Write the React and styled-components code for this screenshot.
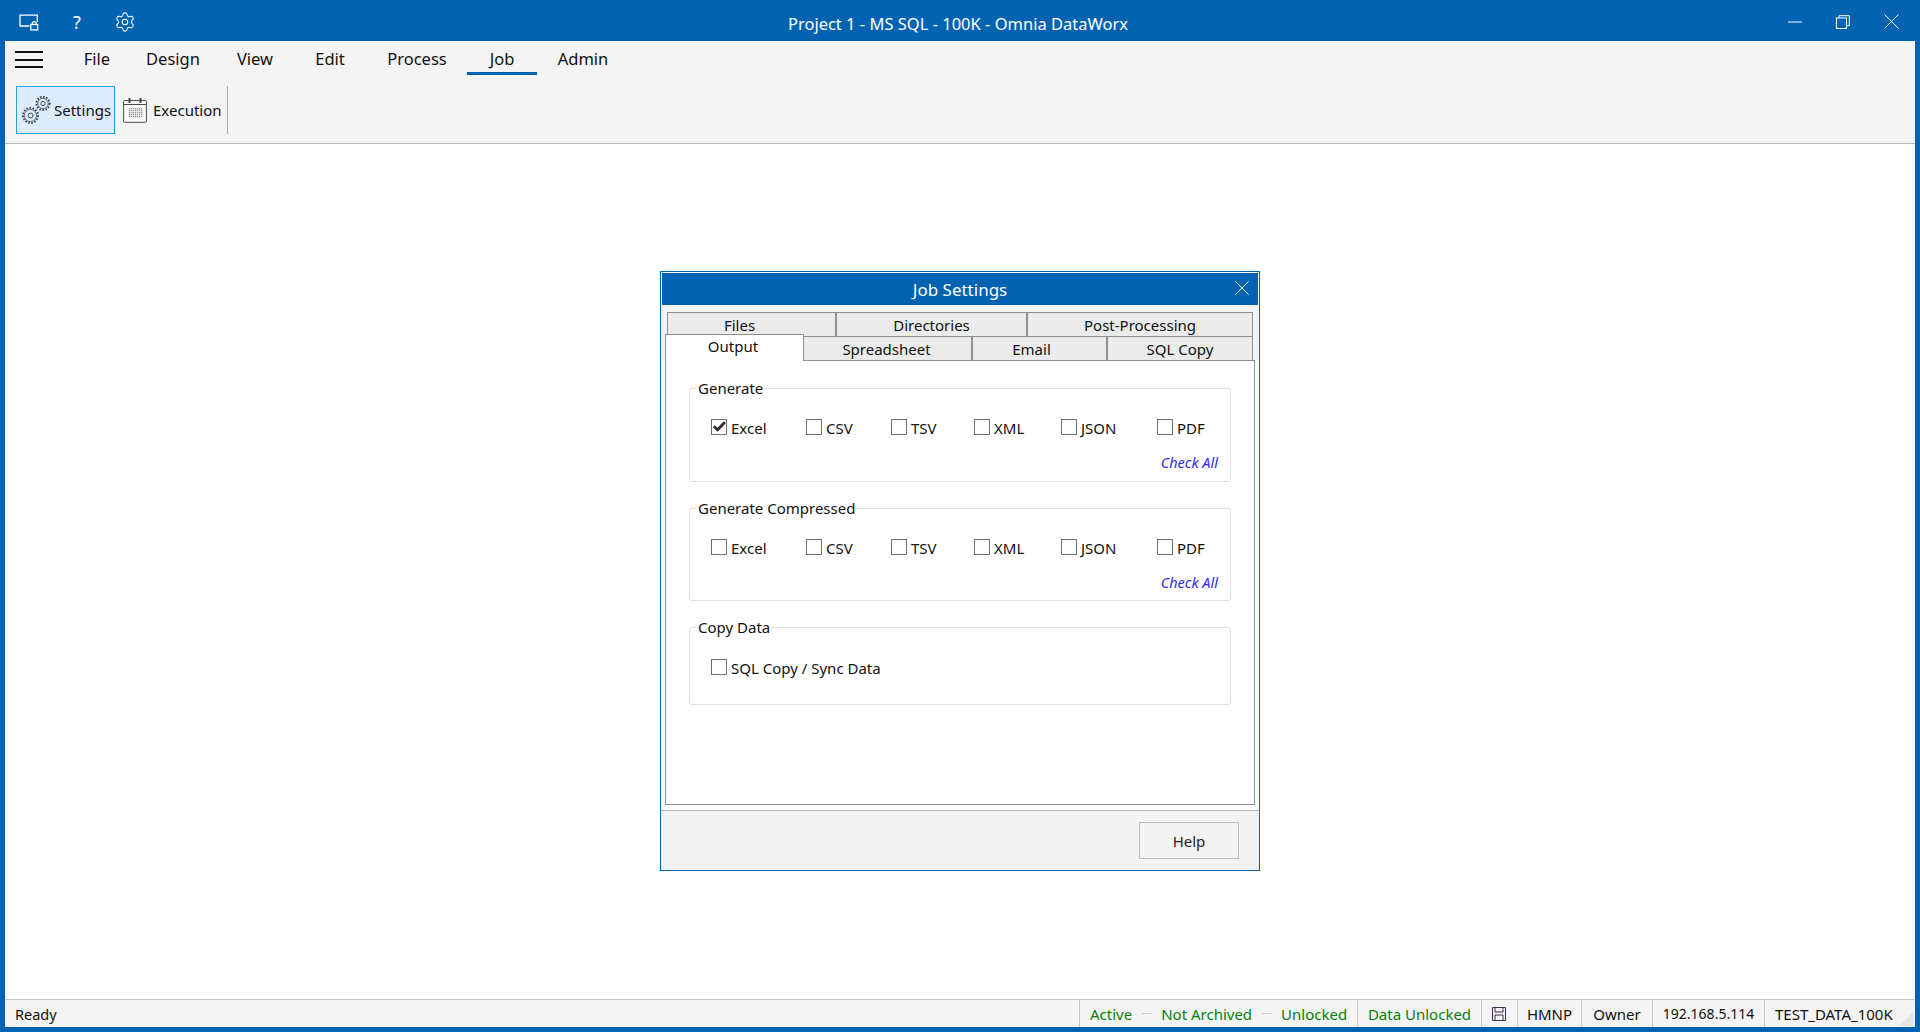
import React from "react";
import styled, { createGlobalStyle } from "styled-components";
import { Settings as GearIcon } from "lucide-react";

const FONT = `"Noto Sans", "Open Sans", sans-serif`;
const BLUE = "#0063b1";

const Global = createGlobalStyle`
  html, body { margin: 0; padding: 0; height: 100%; overflow: hidden; }
  body { font-family: ${FONT}; font-size: 15px; color: #111; }
  * { box-sizing: border-box; }
`;

const Win = styled.div`
  width: 1920px; height: 1032px; background: ${BLUE};
  display: flex; flex-direction: column; padding: 0 5px 5px;
`;
const TitleBar = styled.header`
  height: 41px; flex: none; display: grid; grid-template-columns: 1fr auto 1fr;
  align-items: center; color: #fff;
`;
const TitleGroup = styled.div`
  display: flex; align-items: center; height: 100%;
  justify-content: ${p => (p.$end ? "flex-end" : "flex-start")};
`;
const TitleBtn = styled.button`
  width: 48px; height: 100%; padding: ${p => p.$pt ?? 3}px 0 0; border: 0; background: none; color: #fff;
  display: flex; align-items: center; justify-content: center; font: 18px ${FONT};
`;
const TitleText = styled.div`
  font-size: 16.5px; white-space: nowrap; padding-top: 6px; margin-right: 4px;
`;

const Menu = styled.nav`
  height: 39px; flex: none; background: #f4f4f4; display: flex; align-items: stretch;
`;
const Burger = styled.button`
  width: 60px; padding: 10px 0 0 10px; border: 0; background: none; display: flex; flex-direction: column; gap: 5.5px; align-items: flex-start;
  span { display: block; width: 28px; height: 2px; background: #111; }
`;
const MenuItem = styled.button`
  width: ${p => p.$w}px; height: 34px; border: 0; background: none; padding: 3px 0 0; color: #111;
  font: 16.5px ${FONT}; border-bottom: 3px solid ${p => (p.$active ? BLUE : "transparent")};
  display: flex; align-items: center; justify-content: center;
`;
const Ribbon = styled.div`
  height: 64px; flex: none; background: #f4f4f4; border-bottom: 1px solid #bdbdbd;
  display: flex; align-items: flex-start; padding: 6px 0 0 11px;
`;
const RibbonBtn = styled.button`
  height: 48px; width: ${p => p.$w}px; display: flex; align-items: center; gap: ${p => p.$gap}px;
  padding: 0 0 0 ${p => p.$pl}px; font: 15px ${FONT}; color: #111; white-space: nowrap;
  background: ${p => (p.$active ? "#dcebfd" : "none")};
  border: 1px solid ${p => (p.$active ? "#2b9fd9" : "transparent")};
`;
const RibbonSep = styled.div`
  width: 1px; height: 48px; background: #a9a9a9; margin-left: 2px;
`;

const Canvas = styled.main`
  flex: 1; background: #fff; display: flex; align-items: center; justify-content: center; padding-bottom: 1px;
`;
const Dialog = styled.section`
  width: 600px; height: 600px; border: 1px solid ${BLUE}; padding: 1px 1px 0; background: #fff;
  display: flex; flex-direction: column;
`;
const DialogTitle = styled.div`
  height: 32px; flex: none; background: ${BLUE}; color: #fff; display: grid; grid-template-columns: 1fr auto 1fr;
  align-items: center; font-size: 17px;
`;
const DialogClose = styled.button`
  justify-self: end; border: 0; background: none; padding: 0; margin: 0 9px 2px 0; height: 14px; display: flex;
`;
const TabStrip = styled.div`
  height: 55px; flex: none; background: #f4f4f4; padding: 7px 5px 0 3px; display: flex; flex-direction: column;
`;
const TabRow = styled.div`
  display: flex; height: 24px; flex: none; padding-left: ${p => p.$pl || 0}px;
`;
const Tab = styled.button`
  width: ${p => p.$w}px; height: 24px; padding: 1px ${p => p.$pr || 0}px 0 0; margin: 0; background: #ebebeb; color: #111; font: 15px ${FONT};
  border: 0; border-top: 1px solid #8e8e93; border-right: 2px solid #8e8e93;
  &:first-child { border-left: 1px solid #8e8e93; }
  &:last-child { border-right-width: 1px; }
`;
const ActiveTab = styled.button`
  width: ${p => p.$w}px; height: 27px; margin-top: -2px; position: relative; z-index: 1; background: #fff; color: #111;
  font: 15px ${FONT}; border: 1px solid #8e8e93; border-bottom: 0; padding: 0 3px 4px 0;
`;
const Panel = styled.div`
  flex: 1; margin: 0 3px 5px; background: #fff; border: 1px solid #8e8e93; padding: 17px 23px 0;
  display: flex; flex-direction: column; gap: 16px;
`;
const Group = styled.fieldset`
  margin: 0; padding: 0; height: ${p => p.$h}px; border: 1px solid #d9e0e8; border-radius: 3px; min-width: 0; flex: none;
`;
const Legend = styled.legend`
  margin-left: 7px; padding: 0 1px; font-size: 15px; line-height: 20px; height: 20px; color: #111;
`;
const CheckRow = styled.div`
  display: flex; padding: ${p => p.$pt ?? 21}px 0 0 21px; align-items: center;
`;
const CheckItem = styled.label`
  width: ${p => p.$w}px; display: flex; align-items: center; gap: 4px; font-size: 15px; white-space: nowrap; height: 16px;
`;
const CheckText = styled.span`
  display: block; padding-top: 2px;
`;
const Box = styled.span`
  width: 16px; height: 16px; flex: none; border: 1px solid #6f6f6f; background: #fff; display: block;
  svg { display: block; }
`;
const CheckAllRow = styled.div`
  display: flex; justify-content: flex-end; padding: 18px 12px 0 0;
`;
const CheckAll = styled.a`
  font: italic 14.5px ${FONT}; color: #2a2af0; line-height: 18px;
`;
const Footer = styled.footer`
  height: 60px; margin: 0 -1px; flex: none; background: #f3f3f3; border-top: 1px solid #b9b9b9;
  display: flex; justify-content: flex-end; align-items: flex-start; padding: 11px 20px 0 0;
`;
const HelpBtn = styled.button`
  width: 100px; height: 37px; border: 1px solid #bcbcbc; background: #f3f3f3; font: 15px ${FONT}; color: #222; padding: 0;
`;

const StatusBar = styled.footer`
  height: 28px; flex: none; background: #f4f4f4; border-top: 1px solid #c6c6c6; display: flex; align-items: stretch; font-size: 15px; position: relative;
`;
const Ready = styled.div`
  flex: 1; padding-left: 10px; display: flex; align-items: center; color: #111; font-size: 14.5px;
`;
const Cell = styled.div`
  width: ${p => p.$w}px; flex: none; border-left: 1px solid #c6c6c6; display: flex; align-items: center;
  justify-content: ${p => (p.$start ? "flex-start" : "center")}; padding: 0 ${p => p.$pr || 0}px 0 ${p => p.$pl || 0}px;
  color: ${p => (p.$green ? "#078007" : "#111")}; white-space: nowrap; font-size: ${p => p.$fs || 15}px;
`;
const Dash = styled.span`
  width: 10px; height: 1px; background: #cfcfcf; margin: 0 9.5px; flex: none;
`;
const Grip = styled.svg`
  position: absolute; right: 2px; bottom: 1px;
`;

const LockIcon = () => (
  <svg width="20" height="17" viewBox="0 0 20 17" fill="none" stroke="#fff" strokeWidth="1.3">
    <path d="M10.5 12H1V1.2h17.3V8" />
    <rect x="11.8" y="10.5" width="6.8" height="5.4" />
    <path d="M13.3 10.5V9a2 2 0 0 1 3.8 0v1.5" />
  </svg>
);
const Cog = ({ x, y, r }) => (
  <g transform={`translate(${x} ${y})`} fill="none" stroke="#454a50">
    <circle r={r} strokeWidth="2" strokeDasharray="1.6 1.5" />
    <circle r={r - 1.4} strokeWidth="0.8" />
    <circle r={r * 0.32} strokeWidth="1" />
  </g>
);
const GearsIcon = () => (
  <svg width="29" height="29" viewBox="0 0 29 29">
    <Cog x={8.5} y={19.5} r={7.5} />
    <Cog x={21} y={7.5} r={6.6} />
  </svg>
);
const CalendarIcon = () => {
  const dots = [];
  for (let r = 0; r < 5; r++) for (let c = 0; c < 7; c++) dots.push(<rect key={`${r}-${c}`} x={6 + c * 2} y={11 + r * 2} width="1.3" height="1.3" fill="#8f8f8f" />);
  return (
    <svg width="24" height="26" viewBox="0 0 24 26" fill="none">
      <rect x="0.6" y="3.5" width="22.8" height="21.8" rx="1.2" fill="#fbfbfb" stroke="#4a4a4a" />
      <path d="M1 7.5h22" stroke="#4a4a4a" />
      <path d="M6.5 1v5M17.5 1v5" stroke="#4a4a4a" strokeWidth="2" />
      {dots}
    </svg>
  );
};
const SaveIcon = () => (
  <svg width="14" height="14" viewBox="0 0 14 14" fill="none" stroke="#3a2a4d">
    <path d="M.5.5h13v13H.5z" />
    <path d="M3 .5v4.5h8V.5M3 13.5V8h8v5.5" />
  </svg>
);
const X = ({ s, w = 1 }) => (
  <svg width={s} height={s} viewBox={`0 0 ${s} ${s}`} stroke="#fff" strokeWidth={w}><path d={`M.5.5 ${s - .5} ${s - .5}M${s - .5} .5 .5 ${s - .5}`} /></svg>
);
const Tick = () => (
  <svg width="14" height="14" viewBox="0 0 14 14" fill="none" stroke="#2b2b2b" strokeWidth="2.8"><path d="M1.8 6.2 5.6 9.8 12.8 2.2" /></svg>
);

const formats = [["Excel", 95], ["CSV", 85], ["TSV", 83], ["XML", 87], ["JSON", 96], ["PDF", 60]];
const Check = ({ w, label, on }) => (
  <CheckItem $w={w}><Box>{on && <Tick />}</Box><CheckText>{label}</CheckText></CheckItem>
);
const FormatGroup = ({ title, checked, h }) => (
  <Group $h={h}>
    <Legend>{title}</Legend>
    <CheckRow>
      {formats.map(([l, w]) => <Check key={l} w={w} label={l} on={l === checked} />)}
    </CheckRow>
    <CheckAllRow><CheckAll>Check All</CheckAll></CheckAllRow>
  </Group>
);

export default function App() {
  return (
    <>
      <Global />
      <Win>
        <TitleBar>
          <TitleGroup>
            <TitleBtn><LockIcon /></TitleBtn>
            <TitleBtn>?</TitleBtn>
            <TitleBtn><GearIcon size={22} strokeWidth={1.15} /></TitleBtn>
          </TitleGroup>
          <TitleText>Project 1 - MS SQL - 100K - Omnia DataWorx</TitleText>
          <TitleGroup $end>
            <TitleBtn><svg width="14" height="2" stroke="#fff"><path d="M0 1h14" /></svg></TitleBtn>
            <TitleBtn>
              <svg width="14" height="14" viewBox="0 0 14 14" fill="none" stroke="#fff">
                <rect x=".5" y="3" width="10" height="10.5" />
                <path d="M3 3V.7h10.3v10H10.5" />
              </svg>
            </TitleBtn>
            <TitleBtn $pt={2}><X s={15} /></TitleBtn>
          </TitleGroup>
        </TitleBar>
        <Menu>
          <Burger><span /><span /><span /></Burger>
          <MenuItem $w={64}>File</MenuItem>
          <MenuItem $w={88}>Design</MenuItem>
          <MenuItem $w={76}>View</MenuItem>
          <MenuItem $w={74}>Edit</MenuItem>
          <MenuItem $w={100}>Process</MenuItem>
          <MenuItem $w={70} $active>Job</MenuItem>
          <MenuItem $w={92}>Admin</MenuItem>
        </Menu>
        <Ribbon>
          <RibbonBtn $active $w={99} $gap={3} $pl={5}><GearsIcon />Settings</RibbonBtn>
          <RibbonBtn $w={110} $gap={6} $pl={7}><CalendarIcon />Execution</RibbonBtn>
          <RibbonSep />
        </Ribbon>
        <Canvas>
          <Dialog>
            <DialogTitle>
              <span />
              <span>Job Settings</span>
              <DialogClose><X s={14} /></DialogClose>
            </DialogTitle>
            <TabStrip>
              <TabRow $pl={2}>
                <Tab $w={170} $pr={24}>Files</Tab>
                <Tab $w={191}>Directories</Tab>
                <Tab $w={225}>Post-Processing</Tab>
              </TabRow>
              <TabRow>
                <ActiveTab $w={139}>Output</ActiveTab>
                <Tab $w={169} $pr={2}>Spreadsheet</Tab>
                <Tab $w={135} $pr={16}>Email</Tab>
                <Tab $w={145}>SQL Copy</Tab>
              </TabRow>
            </TabStrip>
            <Panel>
              <FormatGroup title="Generate" checked="Excel" h={104} />
              <FormatGroup title="Generate Compressed" h={103} />
              <Group $h={88}>
                <Legend>Copy Data</Legend>
                <CheckRow $pt={22}><Check w={300} label="SQL Copy / Sync Data" /></CheckRow>
              </Group>
            </Panel>
            <Footer><HelpBtn>Help</HelpBtn></Footer>
          </Dialog>
        </Canvas>
        <StatusBar>
          <Ready>Ready</Ready>
          <Cell $w={278} $start $pl={10} $green>Active<Dash />Not Archived<Dash />Unlocked</Cell>
          <Cell $w={124} $green>Data Unlocked</Cell>
          <Cell $w={36} $pr={2}><SaveIcon /></Cell>
          <Cell $w={64}>HMNP</Cell>
          <Cell $w={71}>Owner</Cell>
          <Cell $w={112} $fs={14}>192.168.5.114</Cell>
          <Cell $w={151} $start $pl={10}>TEST_DATA_100K</Cell>
          <Grip width="14" height="14" viewBox="0 0 14 14"><path d="M14 0v14H0z" fill="#e4e4e4" /></Grip>
        </StatusBar>
      </Win>
    </>
  );
}
